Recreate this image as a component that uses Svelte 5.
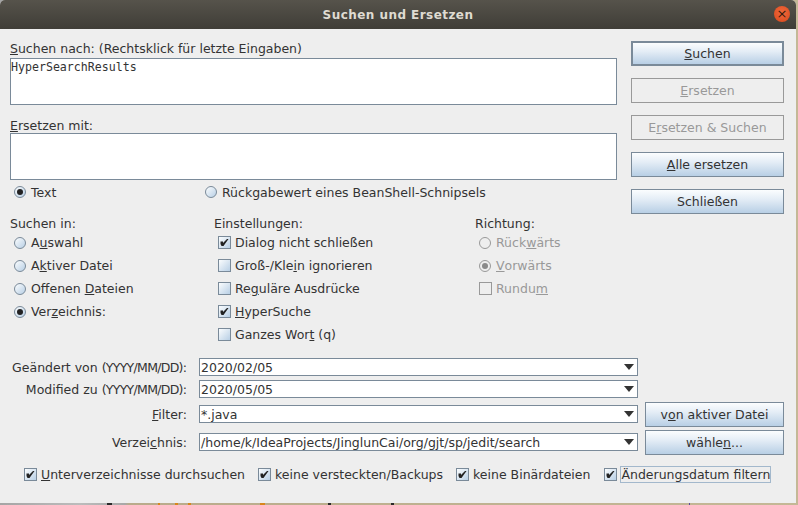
<script lang="ts">
	const scopes = [
		{ parts: ['A', 'u', 'swahl'], on: false },
		{ parts: ['A', 'k', 'tiver Datei'], on: false },
		{ parts: ['Offenen ', 'D', 'ateien'], on: false },
		{ parts: ['Ver', 'z', 'eichnis:'], on: true }
	];
	const settings = [
		{ parts: ['Dialog nicht schließen', '', ''], on: true },
		{ parts: ['Groß-/Kle', 'i', 'n ignorieren'], on: false },
		{ parts: ['Re', 'g', 'uläre Ausdrücke'], on: false },
		{ parts: ['', 'H', 'yperSuche'], on: true },
		{ parts: ['Ganzes Wor', 't', ' (q)'], on: false }
	];
	const fields = [
		{ parts: ['', 'Geändert von ', ''], value: '2020/02/05', dated: true },
		{ parts: ['', 'Modified zu ', ''], value: '2020/05/05', dated: true },
		{ parts: ['', 'F', 'ilter:'], value: '*.java', dated: false },
		{ parts: ['Verzei', 'c', 'hnis:'], value: '/home/k/IdeaProjects/JinglunCai/org/gjt/sp/jedit/search', dated: false }
	];
	const bottom = [
		{ parts: ['', 'U', 'nterverzeichnisse durchsuchen'] },
		{ parts: ['keine versteckten/Backups', '', ''] },
		{ parts: ['keine Binärdateien', '', ''] }
	];
</script>

{#snippet label(parts: string[])}<span class="txt">{parts[0]}{#if parts[1]}<u>{parts[1]}</u>{/if}{parts[2]}</span>{/snippet}

{#snippet radio(on: boolean, off = false)}
	<span class="radio" class:off>{#if on}<span class="dot"></span>{/if}</span>
{/snippet}

{#snippet check(on: boolean, off = false)}
	<span class="check" class:off>
		{#if on}
			<svg width="11" height="11" viewBox="0 0 11 11"><path d="M1.5 4.5h2.5v1.5L8 2h1.5L4.5 9H2.5L1.5 7z" fill="#222" /></svg>
		{/if}
	</span>
{/snippet}

<div class="desktop">
	<div class="window">
		<header class="titlebar">
			<span class="title">Suchen und Ersetzen</span>
			<span class="close">×</span>
		</header>

		<div class="content">
			<div class="top">
				<div class="inputs">
					<div class="lbl first"><u>S</u>uchen nach: (Rechtsklick für letzte Eingaben)</div>
					<div class="area mono">HyperSearchResults</div>
					<div class="lbl second"><u>E</u>rsetzen mit:</div>
					<div class="area"></div>
					<div class="kind">
						<span class="opt text-opt">{@render radio(true)}Text</span>
						<span class="opt">{@render radio(false)}Rückgabewert eines BeanShell-Schnipsels</span>
					</div>
				</div>
				<div class="actions">
					<button class="btn default"><u>S</u>uchen</button>
					<button class="btn" disabled><u>E</u>rsetzen</button>
					<button class="btn" disabled>E<u>r</u>setzen &amp; Suchen</button>
					<button class="btn"><u>A</u>lle ersetzen</button>
					<button class="btn">Schließen</button>
				</div>
			</div>

			<div class="options">
				<div class="col scope">
					<div class="head">Suchen in:</div>
					{#each scopes as s}
						<div class="opt row">{@render radio(s.on)}{@render label(s.parts)}</div>
					{/each}
				</div>
				<div class="col settings">
					<div class="head">Einstellungen:</div>
					{#each settings as s}
						<div class="opt row">{@render check(s.on)}{@render label(s.parts)}</div>
					{/each}
				</div>
				<div class="col direction">
					<div class="head">Richtung:</div>
					<div class="opt row dis">{@render radio(false, true)}Rück<u>w</u>ärts</div>
					<div class="opt row dis">{@render radio(true, true)}<u>V</u>orwärts</div>
					<div class="opt row dis">{@render check(false, true)}Rundu<u>m</u></div>
				</div>
			</div>

			<div class="fields">
				{#each fields as f, i}
					<div class="field r{i}">
						{#if f.dated}
							<span class="field-label">{f.parts[1]}<span class="tight">(YYYY/MM/DD)</span>:</span>
						{:else}
							<span class="field-label">{@render label(f.parts)}</span>
						{/if}
						<div class="combo">
							<span class="combo-text">{f.value}</span>
							<span class="arrow"></span>
						</div>
						{#if i === 2}
							<button class="btn side">v<u>o</u>n aktiver Datei</button>
						{:else if i === 3}
							<button class="btn side">wähle<u>n</u>...</button>
						{/if}
					</div>
				{/each}
			</div>

			<div class="bottom">
				{#each bottom as b}
					<span class="opt">{@render check(true)}{@render label(b.parts)}</span>
				{/each}
				<span class="opt last">{@render check(true)}<span class="focus">Änderungsdatum filtern</span></span>
			</div>
		</div>
	</div>
</div>

<style>
	:global(body) {
		margin: 0;
	}

	.desktop {
		width: 798px;
		height: 505px;
		overflow: hidden;
		background:
			linear-gradient(90deg, transparent 107px, #2a2a2a 107px 112px, transparent 112px 158px, #d8861c 158px 160px, transparent 160px 175px, #d8861c 175px 178px, transparent 178px 188px, #d8861c 188px 191px, transparent 191px 260px, #d8861c 260px 265px, transparent 265px 328px, #2a2a2a 328px 331px, transparent 331px 391px, #2a2a2a 391px 394px, transparent 394px 689px, #5a4a9a 689px 690px, transparent 690px),
			linear-gradient(90deg, #a5a5a5 0, #bcbcbc 80px, #a8a8a8 125px, #b9ab8b 129px, #c4b896 100%);
	}

	.window {
		width: 796px;
		height: 503px;
		background: #eeeeee;
		font-family: 'DejaVu Sans', sans-serif;
		font-size: 12.5px;
		color: #333;
		border-radius: 5px 5px 0 0;
		overflow: hidden;
	}

	.titlebar {
		height: 29px;
		display: flex;
		align-items: center;
		justify-content: center;
		position: relative;
		background: linear-gradient(#56534b, #3f3d37);
	}

	.title {
		color: #dfdbd2;
		font-weight: 700;
		font-size: 12px;
		letter-spacing: 0.45px;
	}

	.close {
		position: absolute;
		right: 6px;
		top: 6px;
		width: 16px;
		height: 16px;
		border-radius: 50%;
		background: radial-gradient(circle at 50% 40%, #f0693c, #d9481c);
		color: #3a1a0c;
		font-size: 13px;
		line-height: 15px;
		text-align: center;
	}

	.content {
		padding: 12px 12px 0 10px;
	}

	.top {
		display: flex;
		justify-content: space-between;
		height: 173px;
	}

	.inputs {
		width: 607px;
	}

	.lbl {
		height: 17px;
		line-height: 15px;
	}

	.second {
		margin-top: 13px;
		height: 15px;
		line-height: 16px;
	}

	.area {
		height: 45px;
		background: #fff;
		border: 1px solid #7a8a99;
		line-height: 16px;
	}

	.mono {
		font-family: 'DejaVu Sans Mono', monospace;
		font-size: 11.6px;
	}

	.kind {
		display: flex;
		margin-top: 4px;
		padding-left: 4px;
	}

	.text-opt {
		width: 191px;
	}

	.opt {
		display: inline-flex;
		align-items: center;
		white-space: nowrap;
		height: 16px;
	}

	.txt {
		white-space: pre;
	}

	.actions {
		width: 153px;
		display: flex;
		flex-direction: column;
		gap: 12px;
	}

	.btn {
		width: 153px;
		height: 25px;
		padding: 0;
		font: inherit;
		color: #333;
		border: 1px solid #7a8a99;
		background: linear-gradient(#fbfdfe 0, #e4edf6 40%, #b8cfe5 100%);
		white-space: nowrap;
	}

	.btn.default {
		border-width: 2px;
	}

	.btn:disabled {
		background: transparent;
		border-color: #999;
		color: #999;
	}

	.side {
		width: 139px;
		flex: none;
		margin-left: 7px;
	}

	.options {
		display: flex;
		margin-top: 2px;
	}

	.col {
		display: flex;
		flex-direction: column;
	}

	.scope {
		width: 204px;
	}

	.settings {
		width: 261px;
	}

	.head {
		height: 15px;
		line-height: 16px;
	}

	.row {
		height: 23px;
		padding-left: 4px;
	}

	.dis {
		color: #999;
	}

	.radio {
		width: 12px;
		height: 12px;
		box-sizing: border-box;
		border: 1px solid #7a8a99;
		border-radius: 50%;
		margin-right: 5px;
		flex: none;
		display: inline-flex;
		align-items: center;
		justify-content: center;
		background: linear-gradient(135deg, #fbfdfe, #b8cfe5);
	}

	.radio.off {
		background: transparent;
		border-color: #999;
	}

	.dot {
		width: 6px;
		height: 6px;
		border-radius: 50%;
		background: #222;
	}

	.radio.off .dot {
		background: #8a8a8a;
	}

	.check {
		width: 13px;
		height: 13px;
		box-sizing: border-box;
		border: 1px solid #7a8a99;
		margin-right: 4px;
		flex: none;
		display: inline-flex;
		align-items: center;
		justify-content: center;
		background: linear-gradient(135deg, #fbfdfe, #b8cfe5);
	}

	.check.off {
		background: transparent;
		border-color: #999;
	}

	.fields {
		margin-top: 12px;
		display: flex;
		flex-direction: column;
	}

	.field {
		display: flex;
		align-items: center;
		height: 18px;
	}

	.r1 {
		margin-top: 4px;
	}

	.r2 {
		margin-top: 7px;
	}

	.r3 {
		margin-top: 10px;
	}

	.field-label {
		width: 177px;
		text-align: right;
		margin-right: 12px;
		flex: none;
		white-space: nowrap;
	}

	.tight {
		letter-spacing: -0.7px;
	}

	.combo {
		width: 439px;
		height: 18px;
		box-sizing: border-box;
		background: #fff;
		border: 1px solid #7a8a99;
		display: flex;
		align-items: center;
		justify-content: space-between;
		padding: 0 3px 0 1px;
		flex: none;
	}

	.arrow {
		width: 0;
		height: 0;
		border-left: 5px solid transparent;
		border-right: 5px solid transparent;
		border-top: 6px solid #333;
	}

	.bottom {
		display: flex;
		gap: 13px;
		margin-top: 15px;
		padding-left: 14px;
	}

	.last {
		margin-left: 1px;
	}

	.focus {
		outline: 1px solid #a3b8cc;
	}
</style>
